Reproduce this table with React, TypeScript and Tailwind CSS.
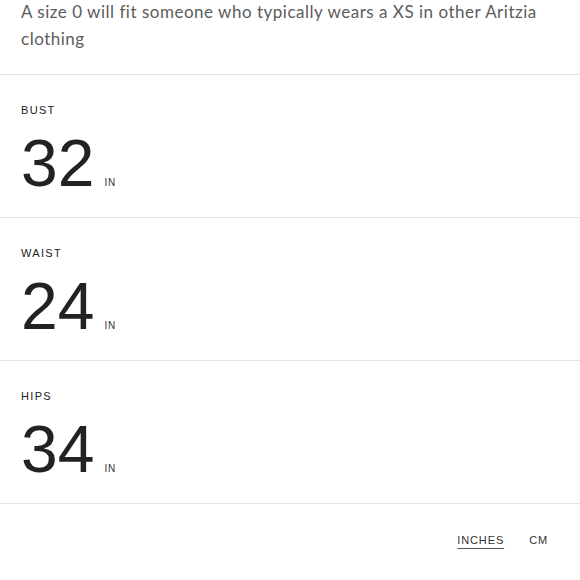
const rows = [
  { label: 'BUST', value: '32' },
  { label: 'WAIST', value: '24' },
  { label: 'HIPS', value: '34' },
];

export default function App() {
  return (
    <div className="w-[580px] h-[580px] bg-white overflow-hidden" style={{ fontFamily: 'Lato, "Liberation Sans", sans-serif' }}>
      <div className="px-[21px] pb-[22px] border-b border-[#e2e2e2]">
        <p className="-mt-[2px] text-[17px] leading-[27px] text-[#5c5c5c] tracking-[0.03em]">
          A size 0 will fit someone who typically wears a XS in other Aritzia clothing
        </p>
      </div>
      {rows.map((r) => (
        <div key={r.label} className="px-[21px] pt-[27px] pb-[21px] border-b border-[#e2e2e2]">
          <div className="text-[11px] leading-[16px] tracking-[0.12em] text-[#222]" style={{ fontFamily: '"Liberation Sans", sans-serif' }}>
            {r.label}
          </div>
          <div className="flex items-baseline mt-[12px]" style={{ fontFamily: '"Liberation Sans", sans-serif' }}>
            <span className="text-[66px] leading-none text-[#222]">{r.value}</span>
            <span className="ml-[10px] text-[10px] tracking-[0.08em] text-[#333]">IN</span>
          </div>
        </div>
      ))}
      <div className="flex justify-end items-center gap-[25px] pr-[32px] pt-[28px]" style={{ fontFamily: '"Liberation Sans", sans-serif' }}>
        <span className="text-[11px] tracking-[0.08em] text-[#333] underline underline-offset-[4px] decoration-[#555]">INCHES</span>
        <span className="text-[11px] tracking-[0.08em] text-[#333]">CM</span>
      </div>
    </div>
  );
}
